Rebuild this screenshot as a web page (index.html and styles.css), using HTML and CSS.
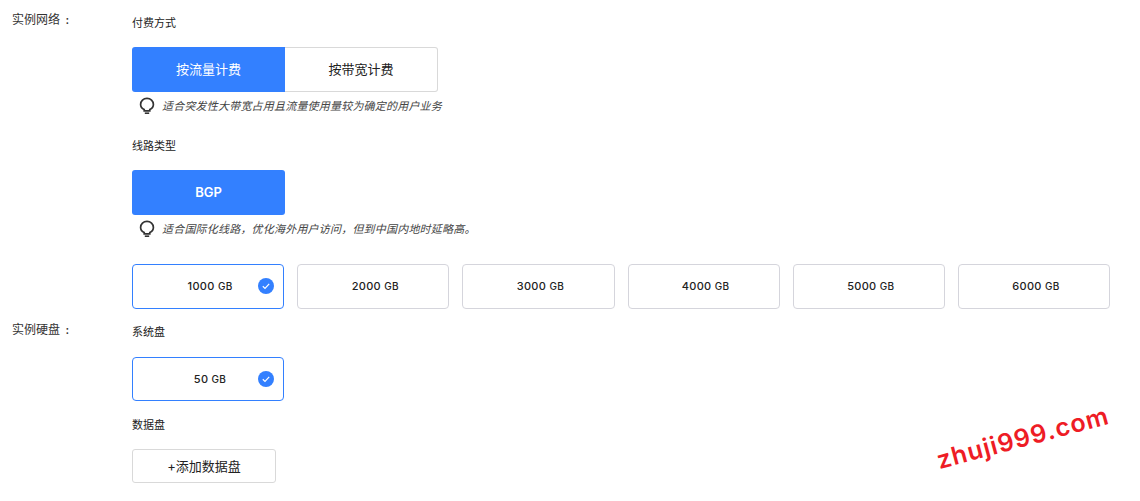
FILE: index.html
```html
<!DOCTYPE html>
<html lang="zh">
<head>
<meta charset="utf-8">
<title>实例配置</title>
<link rel="stylesheet" href="styles.css">
</head>
<body>
<section class="row row-network">
  <div class="row-label">实例网络 <span class="colon">:</span></div>
  <div class="row-body">
    <div class="sub-title">付费方式</div>
    <div class="segment">
      <div class="seg-btn active">按流量计费</div>
      <div class="seg-btn seg-plain">按带宽计费</div>
    </div>
    <div class="tip">
      <svg class="bulb" viewBox="0 0 16 18" width="16" height="18"><path d="M5.2 12.6C3 11.5 1.6 9.600 1.600 7.400 1.600 4 4.400 1.400 8 1.400s6.400 2.600 6.400 6c0 2.200-1.400 4.100-3.600 5.200v1.200H5.200z" fill="none" stroke="#333" stroke-width="1.700"/><path d="M5.800 16.200h4.400" stroke="#333" stroke-width="1.600" fill="none"/></svg>
      <span>适合突发性大带宽占用且流量使用量较为确定的用户业务</span>
    </div>
    <div class="sub-title line-title">线路类型</div>
    <div class="segment">
      <div class="seg-btn active seg-bold">BGP</div>
    </div>
    <div class="tip">
      <svg class="bulb" viewBox="0 0 16 18" width="16" height="18"><path d="M5.2 12.6C3 11.5 1.6 9.600 1.600 7.400 1.600 4 4.400 1.400 8 1.400s6.400 2.600 6.400 6c0 2.200-1.400 4.100-3.600 5.200v1.200H5.200z" fill="none" stroke="#333" stroke-width="1.700"/><path d="M5.800 16.200h4.400" stroke="#333" stroke-width="1.600" fill="none"/></svg>
      <span>适合国际化线路，优化海外用户访问，但到中国内地时延略高。</span>
    </div>
    <div class="options">
      <div class="option selected"><span class="opt-text">1000 <small>GB</small></span>
        <svg class="check" viewBox="0 0 16 16" width="16" height="16"><circle cx="8" cy="8" r="8" fill="#3380ff"/><path d="M4.800 8.300l2.200 2.100 4.200-4.600" fill="none" stroke="#fff" stroke-width="1.200"/></svg>
      </div>
      <div class="option"><span class="opt-text">2000 <small>GB</small></span></div>
      <div class="option"><span class="opt-text">3000 <small>GB</small></span></div>
      <div class="option"><span class="opt-text">4000 <small>GB</small></span></div>
      <div class="option"><span class="opt-text">5000 <small>GB</small></span></div>
      <div class="option"><span class="opt-text">6000 <small>GB</small></span></div>
    </div>
  </div>
</section>
<section class="row row-disk">
  <div class="row-label label-disk">实例硬盘 <span class="colon">:</span></div>
  <div class="row-body">
    <div class="sub-title">系统盘</div>
    <div class="option selected disk-option"><span class="opt-text">50 <small>GB</small></span>
      <svg class="check" viewBox="0 0 16 16" width="16" height="16"><circle cx="8" cy="8" r="8" fill="#3380ff"/><path d="M4.800 8.300l2.200 2.100 4.200-4.600" fill="none" stroke="#fff" stroke-width="1.200"/></svg>
    </div>
    <div class="sub-title data-title">数据盘</div>
    <div class="add-btn">+添加数据盘</div>
  </div>
</section>
<div class="watermark">zhuji999.com</div>
</body>
</html>
```
FILE: styles.css
```css
* { box-sizing: border-box; }
html, body { margin: 0; padding: 0; }
body {
  width: 1140px;
  height: 501px;
  overflow: hidden;
  position: relative;
  background: #fff;
  color: #222;
  font-family: "Inter", "Noto Sans CJK SC", sans-serif;
}
.row { display: flex; padding-left: 12px; }
.row-network { padding-top: 12px; }
.row-disk { padding-top: 12px; }
.row-label {
  width: 120px;
  flex: none;
  font-size: 12px;
  line-height: 16px;
  color: #333;
}
.label-disk { padding-top: 1px; }
.colon { margin-left: 2px; font-weight: 500; }
.row-body { width: 978px; flex: none; }
.sub-title {
  font-size: 11px;
  line-height: 22px;
  color: #222;
  height: 20px;
}
.segment { display: flex; margin-top: 15px; }
.seg-btn {
  width: 153px;
  height: 45px;
  display: flex;
  align-items: center;
  justify-content: center;
  padding-bottom: 2px;
  font-size: 13px;
}
.seg-btn.active {
  background: #3380ff;
  color: #fff;
  border-radius: 3px 0 0 3px;
}
.seg-bold.active { border-radius: 3px; font-weight: 600; padding-bottom: 1px; }
.seg-plain {
  border: 1px solid #d9d9d9;
  border-left: none;
  border-radius: 0 3px 3px 0;
  color: #222;
}
.tip {
  display: flex;
  align-items: center;
  height: 18px;
  margin-top: 4px;
  padding-left: 7px;
  font-size: 11px;
  letter-spacing: 0.2px;
  font-style: italic;
  color: #444;
}
.bulb { flex: none; margin-right: 7px; position: relative; top: 1px; }
.line-title { margin-top: 21px; }
.options {
  display: grid;
  grid-template-columns: repeat(6, 1fr);
  column-gap: 13px;
  margin-top: 27px;
}
.option {
  position: relative;
  height: 45px;
  border: 1px solid #d5d5dc;
  border-radius: 4px;
  display: flex;
  align-items: center;
  justify-content: center;
  padding-left: 4px;
  padding-bottom: 1px;
  background: #fff;
}
.option.selected { border-color: #3380ff; }
.opt-text {
  font-size: 11px;
  font-weight: 500;
  color: #222;
  letter-spacing: 0.3px;
}
.opt-text small { font-size: 10px; }
.check { position: absolute; right: 9px; top: 13px; }
.disk-option { width: 152px; height: 44px; margin-top: 16px; }
.data-title { margin-top: 13px; }
.add-btn {
  width: 144px;
  height: 34px;
  margin-top: 15px;
  border: 1px solid #d9d9d9;
  border-radius: 3px;
  display: flex;
  align-items: center;
  justify-content: center;
  padding-bottom: 2px;
  font-size: 13px;
  color: #222;
}
.watermark {
  position: absolute;
  left: 941px;
  top: 445px;
  font-family: "Inter", sans-serif;
  font-weight: 600;
  font-size: 25px;
  line-height: 30px;
  letter-spacing: 1px;
  color: #ee1c25;
  transform: rotate(-15deg);
  transform-origin: 0 100%;
  white-space: nowrap;
}
```
